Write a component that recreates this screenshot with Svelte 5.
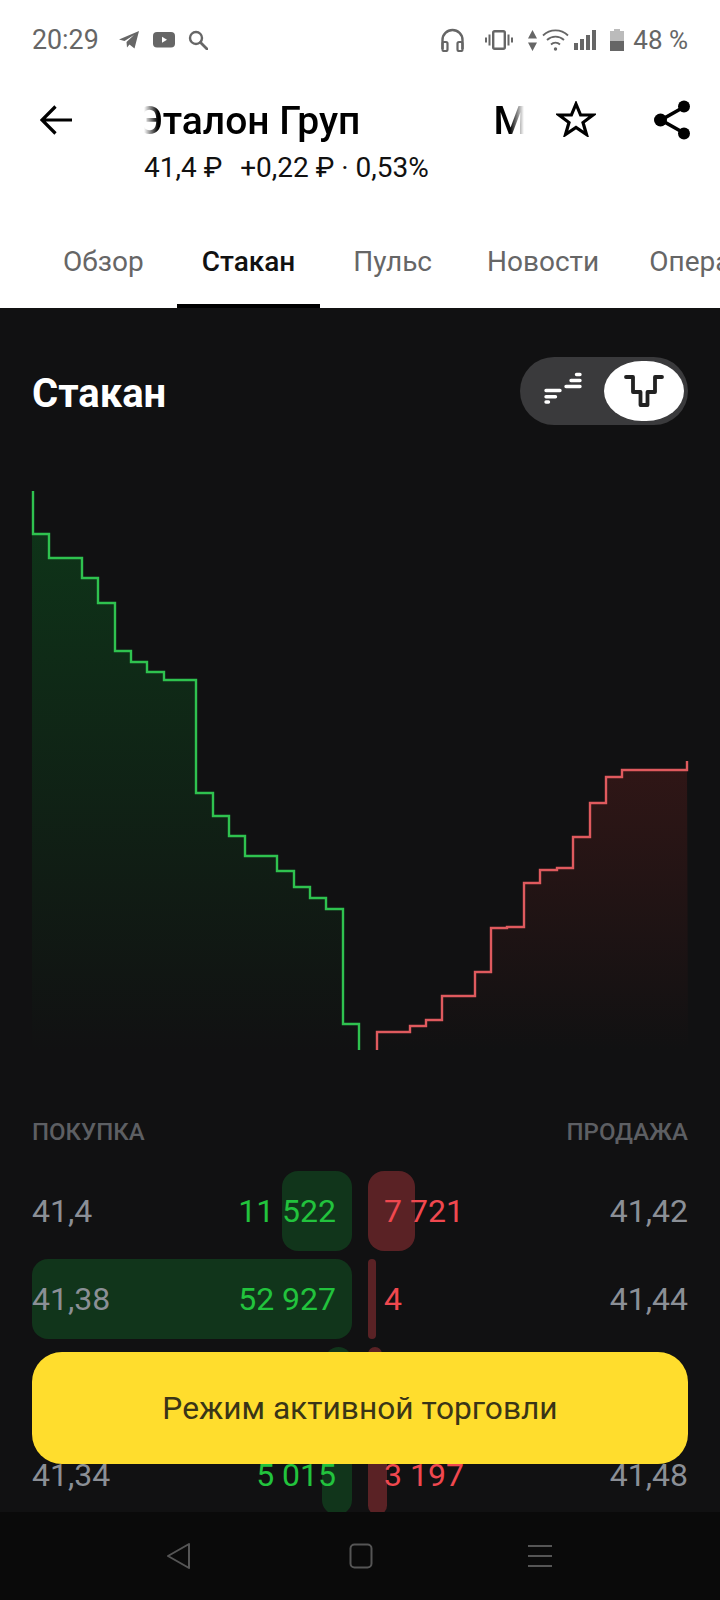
<script>
  const tabs = ["Обзор", "Стакан", "Пульс", "Новости", "Операции"];

  // step lines of the depth chart, in page pixels
  const bids = "33,491 33,534 49,534 49,558 82,558 82,578 98,578 98,603 115,603 115,651 131,651 131,662 147,662 147,672 164,672 164,680 196,680 196,793 213,793 213,816 229,816 229,836 245,836 245,856 277,856 277,871 294,871 294,887 310,887 310,898 326,898 326,909 343,909 343,1024 359,1024 359,1050";
  const asks = "377,1050 377,1032 410,1032 410,1026 426,1026 426,1020 442,1020 442,996 475,996 475,972 491,972 491,928 507,928 507,927 524,927 524,883 540,883 540,870 557,870 557,868 573,868 573,837 590,837 590,803 606,803 606,777 622,777 622,770 687,770 687,761";

  const rows = [
    { bid: "41,4", bidQty: "11 522", bidBar: 70, ask: "41,42", askQty: "7 721", askBar: 47 },
    { bid: "41,38", bidQty: "52 927", bidBar: 320, ask: "41,44", askQty: "4", askBar: 8 },
    { bid: "", bidQty: "", bidBar: 27, ask: "", askQty: "", askBar: 14 },
    { bid: "41,34", bidQty: "5 015", bidBar: 30, ask: "41,48", askQty: "3 197", askBar: 19 },
  ];
</script>

<div class="page">
  <div class="status">
    <span class="time">20:29</span>
    <svg class="st-telegram" width="20" height="18" viewBox="0 0 20 18"><path d="M0 8.5 20 0 15.5 17.5 10.5 13.5 8 16.5 7.5 11 15 4 5.5 10Z" fill="#666"/></svg>
    <svg class="st-youtube" width="22" height="16" viewBox="0 0 22 16"><rect width="22" height="15.5" rx="4" fill="#666"/><path d="M9 4.8 14 7.8 9 10.8Z" fill="#fff"/></svg>
    <svg class="st-search" width="20" height="20" viewBox="0 0 20 20"><circle cx="8" cy="8" r="6" fill="none" stroke="#666" stroke-width="2.4"/><path d="M12.5 12.5 19 19" stroke="#666" stroke-width="2.8" stroke-linecap="round"/></svg>
    <span class="spacer"></span>
    <svg class="st-head" width="23" height="24" viewBox="0 0 23 24"><path d="M1.5 21V12a10 10 0 0 1 20 0v9" fill="none" stroke="#666" stroke-width="2.4"/><rect x="1.5" y="14" width="5" height="9" rx="1.5" fill="none" stroke="#666" stroke-width="2.2"/><rect x="16.5" y="14" width="5" height="9" rx="1.5" fill="none" stroke="#666" stroke-width="2.2"/></svg>
    <svg class="st-vibe" width="28" height="20" viewBox="0 0 28 20"><rect x="8.2" y="1.2" width="11.6" height="17.6" rx="1.5" fill="none" stroke="#666" stroke-width="2.4"/><path d="M4.5 4.5v11M1 7.5v5M23.5 4.5v11M27 7.5v5" stroke="#666" stroke-width="2"/></svg>
    <svg class="st-arrows" width="9" height="21" viewBox="0 0 9 21"><path d="M4.5 0 9 8.5H0ZM0 12.5H9L4.5 21Z" fill="#666"/></svg>
    <svg class="st-wifi" width="27" height="22" viewBox="0 0 27 22"><path d="M1 6.5a18 18 0 0 1 25 0M5 11a12.5 12.5 0 0 1 17 0M9 15.5a6.5 6.5 0 0 1 9 0" fill="none" stroke="#666" stroke-width="1.8"/><circle cx="13.5" cy="20" r="1.7" fill="#666"/></svg>
    <svg class="st-signal" width="22" height="20" viewBox="0 0 22 20"><path d="M0 13h4v7H0ZM6 9h4v11H6ZM12 5h4v15h-4ZM18 0h4v20h-4Z" fill="#666"/></svg>
    <svg class="st-battery" width="14" height="22" viewBox="0 0 14 22"><path d="M4 0h6v2h4v10H0V2h4Z" fill="#bbb"/><rect y="12" width="14" height="10" fill="#666"/></svg>
    <span class="percent">48 %</span>
  </div>

  <div class="header">
    <svg class="back" width="32" height="30" viewBox="0 0 32 30"><path d="M32 15H2M15.5 1.5 2 15l13.5 13.5" fill="none" stroke="#000" stroke-width="3.2"/></svg>
    <div class="info">
      <div class="title">
        <span>Эталон Груп</span>
        <span>М</span>
      </div>
      <div class="price"><span class="last">41,4 ₽</span> +0,22 ₽ · 0,53%</div>
    </div>
    <svg class="star" width="40" height="36" viewBox="0 0 40 36"><path d="M20 3 24.6 14H37L27 21.5 30.5 33.5 20 26.5 9.5 33.5 13 21.5 3 14H15.4Z" fill="none" stroke="#000" stroke-width="3.2"/></svg>
    <svg class="share" width="36" height="40" viewBox="0 0 36 40"><path d="M30 7 7 20 30 33" fill="none" stroke="#000" stroke-width="3.6"/><circle cx="30" cy="6.5" r="6" /><circle cx="6.5" cy="20" r="6.5" /><circle cx="30" cy="33.5" r="6" /></svg>
  </div>

  <div class="tabs">
    {#each tabs as tab, i}
      <div class="tab" class:active={i === 1}>{tab}</div>
    {/each}
  </div>

  <div class="content">
    <div class="heading">
      <h2>Стакан</h2>
      <div class="toggle">
        <div class="seg">
          <svg width="40" height="34" viewBox="0 0 40 34" overflow="visible"><path d="M2 16.5H16M2 22.7H11.5M2 28H4.5M22 12.5H36M27 6.5H36M32.5 0.5H36" stroke="#fff" stroke-width="3.4" stroke-linecap="round"/></svg>
        </div>
        <div class="seg on">
          <svg width="40" height="34" viewBox="0 0 40 34"><path d="M2 3H9V18H16.5V31H23.5V18H31V3H38" fill="none" stroke="#222" stroke-width="3.8" stroke-linecap="round" stroke-linejoin="round"/></svg>
        </div>
      </div>
    </div>

    <svg class="chart" width="720" height="580" viewBox="0 480 720 580">
      <defs>
        <linearGradient id="greenFill" gradientUnits="userSpaceOnUse" x1="0" y1="491" x2="0" y2="1050">
          <stop offset="0" stop-color="#0e3619" />
          <stop offset="1" stop-color="#0e3619" stop-opacity="0" />
        </linearGradient>
        <linearGradient id="redFill" gradientUnits="userSpaceOnUse" x1="0" y1="761" x2="0" y2="1050">
          <stop offset="0" stop-color="#301616" />
          <stop offset="1" stop-color="#301616" stop-opacity="0" />
        </linearGradient>
      </defs>
      <polygon points="32,534 {bids.split(' ').slice(2).join(' ')} 32,1050" fill="url(#greenFill)" />
      <polygon points="{asks} 688,1050" fill="url(#redFill)" />
      <polyline points={bids} fill="none" stroke="#2fc24f" stroke-width="2.4" />
      <polyline points={asks} fill="none" stroke="#df5a5e" stroke-width="2.4" />
    </svg>

    <div class="labels">
      <span>ПОКУПКА</span>
      <span>ПРОДАЖА</span>
    </div>

    <div class="book">
      {#each rows as row}
        <div class="row">
          <div class="cell buy">
            <div class="bar" style="width: {row.bidBar}px"></div>
            <span class="px">{row.bid}</span>
            <span class="qty">{row.bidQty}</span>
          </div>
          <div class="cell sell">
            <div class="bar" style="width: {row.askBar}px"></div>
            <span class="qty">{row.askQty}</span>
            <span class="px">{row.ask}</span>
          </div>
        </div>
      {/each}
    </div>
  </div>

  <button class="trade">Режим активной торговли</button>

  <div class="nav">
    <svg width="28" height="28" viewBox="0 0 28 28"><path d="M23 2 2 14 23 26Z" fill="none" stroke="#555" stroke-width="2" stroke-linejoin="round"/></svg>
    <svg width="24" height="26" viewBox="0 0 24 26"><rect x="1.5" y="1.5" width="21" height="23" rx="4" fill="none" stroke="#555" stroke-width="2"/></svg>
    <svg width="24" height="24" viewBox="0 0 24 24"><path d="M0 2H24M0 12H24M0 22H24" stroke="#555" stroke-width="2"/></svg>
  </div>
</div>

<style>
  :global(body) {
    margin: 0;
    background: #fff;
  }
  .page {
    position: relative;
    display: flex;
    flex-direction: column;
    width: 720px;
    height: 1600px;
    overflow: hidden;
    font-family: Roboto, "Noto Sans", sans-serif;
  }

  .status {
    display: flex;
    align-items: center;
    height: 80px;
    padding: 0 32px;
    box-sizing: border-box;
    color: #666;
    font-size: 26.8px;
    flex: none;
  }
  .spacer {
    flex: 1;
  }
  .percent {
    font-size: 26px;
    margin-left: 9px;
  }
  .st-telegram { margin-left: 20px; }
  .st-youtube { margin-left: 14px; }
  .st-search { margin-left: 13px; }
  .st-vibe { margin-left: 21px; }
  .st-arrows { margin-left: 15px; }
  .st-wifi { margin-left: 5px; }
  .st-signal { margin-left: 5px; }
  .st-battery { margin-left: 14px; }

  .header {
    display: flex;
    align-items: flex-start;
    height: 136px;
    flex: none;
  }
  .back {
    margin: 25px 0 0 40px;
  }
  .info {
    width: 380px;
    margin-left: 72px;
    margin-top: 20px;
  }
  .title {
    display: flex;
    gap: 133px;
    overflow: hidden;
    font-size: 39px;
    font-weight: 500;
    line-height: 42px;
    color: #000;
    white-space: nowrap;
    mask-image: linear-gradient(to right, transparent 0, #000 14px, #000 366px, transparent 380px);
  }
  .title span {
    flex: none;
  }
  .title span:first-child {
    margin-left: -7px;
  }
  .price {
    margin-top: 10px;
    font-size: 28px;
    line-height: 32px;
    color: #111;
    white-space: nowrap;
  }
  .last {
    margin-right: 11px;
  }
  .star {
    margin: 21px 0 0 32px;
  }
  .share {
    margin: 20px 0 0 58px;
  }

  .tabs {
    display: flex;
    gap: 8px;
    height: 92px;
    padding-left: 38px;
    overflow: hidden;
    flex: none;
    box-sizing: border-box;
  }
  .tab {
    flex: none;
    padding: 29px 25px 0;
    box-sizing: border-box;
    font-size: 28px;
    line-height: 34px;
    color: #666;
  }
  .tab:nth-child(4) {
    margin-left: -3px;
  }
  .tab:last-child {
    margin-left: -8px;
  }
  .tab.active {
    color: #111;
    font-weight: 500;
    border-bottom: 4px solid #000;
  }

  .content {
    flex: 1;
    min-height: 0;
    overflow: hidden;
    background: #111112;
  }
  .heading {
    display: flex;
    justify-content: space-between;
    align-items: center;
    margin-top: 49px;
    padding: 0 32px;
  }
  h2 {
    margin: 6px 0 0;
    font-size: 40px;
    font-weight: 700;
    line-height: 48px;
    color: #fff;
  }
  .toggle {
    display: flex;
    justify-content: flex-end;
    align-items: center;
    width: 168px;
    height: 68px;
    padding: 4px;
    box-sizing: border-box;
    border-radius: 34px;
    background: #3a3a3c;
  }
  .seg {
    display: flex;
    align-items: center;
    justify-content: center;
    flex: none;
    width: 80px;
    height: 60px;
    border-radius: 38px / 30px;
  }
  .seg.on {
    background: #fff;
  }

  .chart {
    display: block;
    margin-top: 55px;
  }

  .labels {
    display: flex;
    justify-content: space-between;
    margin-top: 57px;
    padding: 0 32px;
    font-size: 24px;
    font-weight: 500;
    line-height: 30px;
    color: #5d5f63;
  }

  .book {
    display: flex;
    flex-direction: column;
    gap: 8px;
    margin-top: 24px;
    padding: 0 32px;
  }
  .row {
    display: grid;
    grid-template-columns: 320px 320px;
    gap: 16px;
    height: 80px;
    flex: none;
  }
  .cell {
    position: relative;
    display: flex;
    align-items: center;
    justify-content: space-between;
    font-size: 32px;
  }
  .cell span {
    position: relative;
  }
  .bar {
    position: absolute;
    top: 0;
    bottom: 0;
    border-radius: 16px;
  }
  .buy .bar {
    right: 0;
    background: #11351b;
  }
  .sell .bar {
    left: 0;
    background: #5a2225;
  }
  .buy .qty {
    padding-right: 16px;
    color: #22c33d;
  }
  .sell .qty {
    padding-left: 16px;
    color: #f0484f;
  }
  .px {
    color: #8b8f96;
  }

  .trade {
    position: absolute;
    left: 32px;
    right: 32px;
    top: 1352px;
    height: 112px;
    border: none;
    border-radius: 30px;
    background: #ffdd2d;
    color: #3a3517;
    font-family: inherit;
    font-size: 31.7px;
  }

  .nav {
    display: flex;
    justify-content: space-between;
    align-items: center;
    box-sizing: border-box;
    height: 88px;
    padding: 0 168px 0 166px;
    background: #0a0a0a;
    flex: none;
  }
</style>
